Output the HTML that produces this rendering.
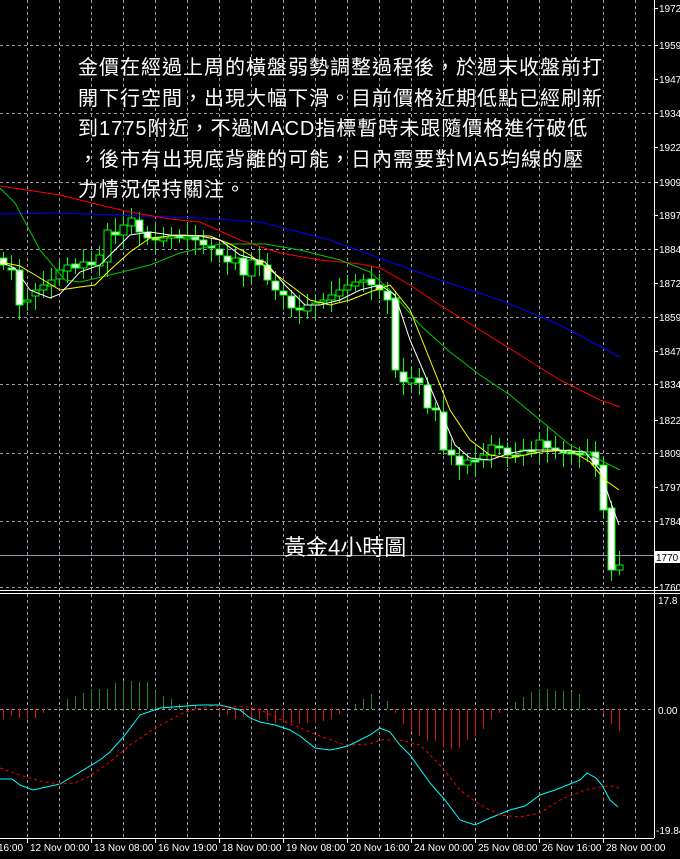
<!DOCTYPE html>
<html><head><meta charset="utf-8">
<style>
html,body{margin:0;padding:0;background:#000;width:680px;height:859px;overflow:hidden}
svg{display:block}
.ax{font-family:"Liberation Sans",sans-serif;font-size:10px;fill:#fff}
.tx{font-family:"Liberation Sans",sans-serif;font-size:10px;fill:#fff}
.ov{position:absolute;left:78px;top:53px;color:#fff;font-family:"Liberation Sans","Noto Sans CJK TC",sans-serif;font-size:20px;line-height:30.5px;letter-spacing:1px;white-space:nowrap}
.tt{position:absolute;left:284px;top:530px;color:#fff;font-family:"Liberation Sans","Noto Sans CJK TC",sans-serif;font-size:22px}
</style></head><body>
<svg id="s" width="680" height="859" xmlns="http://www.w3.org/2000/svg"></svg>
<div class="ov">金價在經過上周的橫盤弱勢調整過程後，於週末收盤前打<br>開下行空間，出現大幅下滑。目前價格近期低點已經刷新<br>到1775附近，不過MACD指標暫時未跟隨價格進行破低<br>，後市有出現底背離的可能，日內需要對MA5均線的壓<br>力情況保持關注。</div>
<div class="tt">黃金4小時圖</div>
<script>
var s=document.getElementById('s'),h='';
function L(x1,y1,x2,y2,c,d,w){h+='<line x1="'+x1+'" y1="'+y1+'" x2="'+x2+'" y2="'+y2+'" stroke="'+c+'" stroke-width="'+(w||1)+'"'+(d?' stroke-dasharray="'+d+'"':'')+'/>';}
function P(pts,c,d){h+='<polyline fill="none" stroke="'+c+'" stroke-width="1" '+(d?'stroke-dasharray="'+d+'" ':'')+'points="'+pts+'"/>';}
for(var x=27;x<654;x+=32){L(x+.5,0,x+.5,590,'#9a9aa8','3,3');L(x+.5,594,x+.5,838,'#9a9aa8','3,3');}
var pr=[[1972,8],[1959,45],[1947,79],[1934,113],[1922,147],[1909,182],[1897,215],[1884,249],[1872,283],[1859,317],[1847,351],[1834,384],[1822,420],[1809,453],[1797,487],[1784,521],[1760,587]];
pr.forEach(function(p,i){if(i%2==1||i==16)L(0,p[1]+.5,654,p[1]+.5,'#9a9aa8','3,3');L(654,p[1]+.5,658,p[1]+.5,'#fff');h+='<text class="ax" x="659" y="'+(p[1]+4)+'">'+p[0]+'</text>';});
L(0,555.5,654,555.5,'#8a9aa8');
var c=[265,270,305,300,290,285,280,270,265,268,262,265,255,230,235,225,218,232,238,240,238,236,238,237,240,245,248,255,262,258,275,260,265,280,290,295,308,310,305,303,300,295,290,285,282,280,285,290,300,370,382,378,383,408,410,450,455,465,460,460,455,445,448,455,455,450,452,440,448,450,452,452,455,452,465,510,570,565];
var o=[258,268,270,302,296,290,286,279,271,264,268,262,266,262,232,235,226,220,232,238,241,238,236,238,237,240,246,249,256,263,258,276,260,265,281,291,296,308,311,305,302,300,296,290,286,282,279,285,291,298,372,383,378,385,408,412,450,456,465,460,460,455,446,448,455,455,450,452,441,448,451,452,453,455,452,465,508,570];
for(var i=0;i<c.length;i++){var x=3+i*8,a=Math.min(o[i],c[i]),b=Math.max(o[i],c[i]);if(b-a<2)b=a+2;
L(x+.5,a-6-(i*7%9),x+.5,b+5+(i*5%11),'#00ff00');
h+='<rect x="'+(x-3)+'" y="'+a+'" width="7" height="'+(b-a)+'" fill="'+(c[i]<o[i]?'#000':'#fff')+'" stroke="#00ff00" stroke-width="1"/>';}
P('0,214 60,213 140,216 200,218 260,222 330,240 390,262 440,280 500,300 560,325 620,357','#0000ff');
P('0,186 60,195 100,205 130,212 170,219 200,222 240,240 280,253 320,260 360,264 380,268 410,285 440,305 480,330 520,355 560,380 600,400 620,407','#ff0000');
P('0,188 15,203 40,250 65,280 80,282 110,275 150,265 180,253 220,244 265,244 300,250 340,260 370,272 390,290 420,325 450,352 480,375 510,395 540,420 570,445 600,460 620,470','#00cc00');
P('0,262 20,266 40,278 60,290 80,287 95,285 110,270 130,252 150,238 180,235 210,236 230,244 250,255 270,270 290,285 310,300 330,305 350,300 370,292 390,285 410,310 430,360 450,410 470,440 490,455 510,458 540,452 570,450 590,462 605,480 619,490','#ffff00');
P('0,262 15,268 30,290 50,298 60,294 80,272 100,265 115,250 130,235 150,232 170,235 200,236 220,240 240,255 265,262 285,285 305,305 320,305 340,300 360,290 380,285 395,295 410,340 425,375 440,410 455,445 470,458 490,460 510,453 530,450 560,450 585,452 600,470 610,500 619,525','#ffffff');
L(0,590.5,680,590.5,'#fff');L(0,593.5,680,593.5,'#fff');L(654.5,0,654.5,838,'#fff');
h+='<rect x="654" y="551" width="26" height="12" fill="#fff"/><text class="ax" x="656" y="561" style="fill:#000">1770</text>';
L(0,709.5,654,709.5,'#9a9aa8','3,3');
var hs={3:-10,11:-7,19:-9,27:-10,35:-9,43:-4,59:2,67:10,75:13,83:16,91:20,99:20,107:20,115:26,123:28,131:28,139:27,147:27,155:18,163:13,171:10,179:5,187:5,195:3,219:-5,227:-6,235:-10,243:-8,251:-12,259:-10,267:-12,275:-14,283:-14,291:-14,299:-15,307:-14,315:-14,323:-12,331:-10,339:-5,355:5,363:10,371:15,387:8,395:-4,403:-15,411:-23,419:-27,427:-32,435:-32,443:-38,451:-40,459:-39,467:-31,475:-27,483:-20,491:-10,499:-4,515:7,523:12,531:17,539:20,547:20,555:18,563:18,571:17,579:15,587:1,603:-5,611:-15,619:-22};
for(var k in hs){var v=hs[k];L(+k+.5,709,+k+.5,709-v,v>0?'#1f8a1f':'#e01010');}
P('0,779 12,779 20,785 33,790 60,784 75,775 100,760 110,752 125,735 140,715 160,708 200,705 220,705 240,710 250,718 260,722 275,725 290,730 300,736 315,748 330,750 340,748 350,745 370,735 380,728 390,732 400,745 410,755 430,783 445,800 460,820 475,825 490,818 510,810 525,806 540,795 555,790 580,780 587,773 596,778 602,785 610,800 618,807','#00ffff');
P('0,768 20,775 40,781 60,784 75,783 90,776 110,762 130,745 155,728 185,712 210,706 250,707 265,712 290,724 320,736 345,745 370,744 380,740 400,740 420,745 440,765 460,790 480,805 500,815 520,817 540,813 560,800 585,790 600,787 610,786 619,788','#ff0000','3,3');
h+='<text class="ax" x="658" y="604">17.8</text><text class="ax" x="658" y="714">0.00</text><text class="ax" x="656" y="834">-19.84</text>';
L(0,838.5,654,838.5,'#fff');
var tl=['16:00','12 Nov 00:00','13 Nov 08:00','16 Nov 19:00','18 Nov 00:00','19 Nov 08:00','20 Nov 16:00','24 Nov 00:00','25 Nov 08:00','26 Nov 16:00','28 Nov 00:00'];
tl.forEach(function(t,i){var x=i==0?-5:27+(i-1)*64;if(i>0)L(x+.5,838,x+.5,843,'#fff');h+='<text class="tx" x="'+(x+3)+'" y="851">'+t+'</text>';});
s.innerHTML=h;
</script>
</body></html>
